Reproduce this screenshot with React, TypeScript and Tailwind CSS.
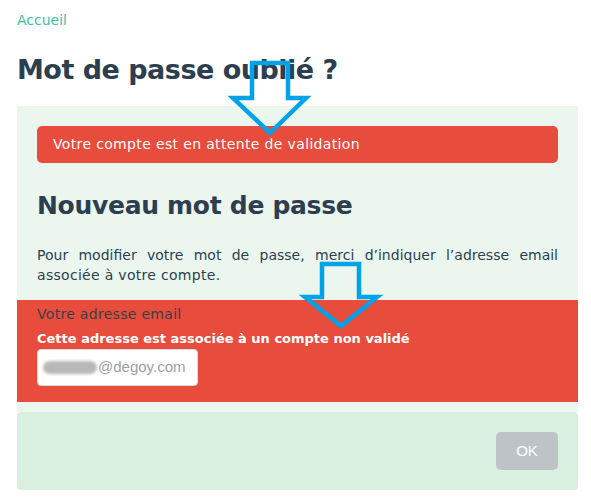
import React from "react";

// annotation arrows drawn over the screenshot
const Arrows = () => (
    <svg className="absolute inset-0 pointer-events-none" width="591" height="499" viewBox="0 0 591 499" fill="none">
        <path d="M252 63 H288 V98 H306 L270 133 L233 98 H252 Z" stroke="#00a2e8" strokeWidth="4.5" />
        <path d="M322 264 H359 V297 H377 L341 326 L305 297 H322 Z" stroke="#00a2e8" strokeWidth="4.5" />
    </svg>
);

export default function App() {
    return (
        <div className="relative w-[591px] h-[499px] bg-white overflow-hidden font-['DejaVu_Sans',sans-serif]">
            <div className="pl-[17px] w-[578px]">
                <a href="#" className="block pt-[11px] text-[14px] text-[#3dbf9f] leading-[18px]">Accueil</a>
                <h1 className="mt-[24px] text-[27px] font-bold leading-[34px] text-[#2c3e50] tracking-[-0.5px]">Mot de passe oublié ?</h1>

                <div className="mt-[19px] bg-[#ebf6ef] pt-[20px] pb-[10px]">
                    <div className="mx-[20px] h-[37px] rounded-[5px] bg-[#e74c3c] px-[16px] flex items-center text-white text-[14px] tracking-[0.35px]">
                        Votre compte est en attente de validation
                    </div>
                    <h2 className="mx-[20px] mt-[27px] text-[25px] font-bold leading-[32px] text-[#2c3e50] tracking-[-0.3px]">Nouveau mot de passe</h2>
                    <div className="mx-[20px] mt-[23px] text-[14px] leading-[20px] text-[#2c3e50]">
                        <div className="text-justify [text-align-last:justify]">Pour modifier votre mot de passe, merci d’indiquer l’adresse email</div>
                        <div className="tracking-[0.3px]">associée à votre compte.</div>
                    </div>
                    <div className="mt-[15px] bg-[#e74c3c] px-[20px] pt-[5px] pb-[16px]">
                        <div className="text-[14px] leading-[18px] text-[#3b3f45] tracking-[0.3px]">Votre adresse email</div>
                        <div className="mt-[7px] text-[13px] font-bold leading-[18px] text-white">Cette adresse est associée à un compte non validé</div>
                        <div className="mt-[1px] w-[161px] h-[37px] rounded-[4px] bg-white border border-[#d5dde2] flex items-center pl-[5px]">
                            <span className="w-[54px] h-[13px] rounded-full bg-[#b8b8b8] blur-[1.5px]" />
                            <span className="ml-[1px] text-[15px] text-[#9aa0a6] font-['Liberation_Sans',sans-serif]">@degoy.com</span>
                        </div>
                    </div>
                </div>

                <div className="bg-[#d9f0e0] rounded-[4px] h-[78px] flex items-center justify-end pr-[20px]">
                    <button className="w-[62px] h-[38px] rounded-[5px] bg-[#bdc3c7] text-white text-[15px] font-['Liberation_Sans',sans-serif]">OK</button>
                </div>
            </div>

            <Arrows />
        </div>
    );
}
